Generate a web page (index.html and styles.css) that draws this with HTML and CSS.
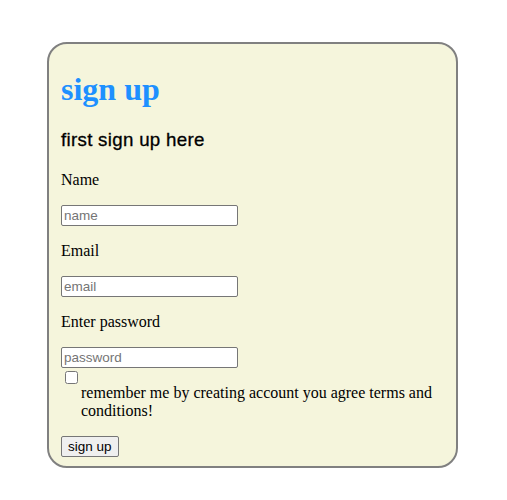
FILE: index.html
```html
<!DOCTYPE html>
<html>
<head>
<meta charset="utf-8">
<link rel="stylesheet" href="styles.css">
</head>
<body>
<form class="card">
  <h1 class="title">sign up</h1>
  <h3 class="subtitle">first sign up here</h3>
  <p class="label">Name</p>
  <input class="field" type="text" placeholder="name">
  <p class="label">Email</p>
  <input class="field" type="email" placeholder="email">
  <p class="label">Enter password</p>
  <input class="field" type="password" placeholder="password">
  <input class="check" type="checkbox">
  <p class="terms">remember me by creating account you agree terms and conditions!</p>
  <button class="btn" type="button">sign up</button>
</form>
</body>
</html>
```
FILE: styles.css
```css
body {
  margin: 8px;
  font-family: "Liberation Serif", "Times New Roman", serif;
  font-size: 16px;
  background: #ffffff;
}
.card {
  box-sizing: border-box;
  width: 411px;
  margin: 34px 0 0 39px;
  padding: 6px 12px 9px 12px;
  background: #f5f5dc;
  border: 2px solid #808080;
  border-radius: 20px;
}
.title {
  margin: 21px 0;
  font-size: 32px;
  font-weight: bold;
  color: #1e90ff;
}
.subtitle {
  margin: 18px 0 20px 0;
  font-family: "Liberation Sans", Arial, sans-serif;
  font-size: 18.72px;
  font-weight: normal;
  letter-spacing: 0.3px;
  -webkit-text-stroke: 0.3px #000;
}
.label {
  margin: 16px 0;
}
.field {
  box-sizing: border-box;
  display: block;
  width: 177px;
  height: 21px;
  margin: 0;
  padding: 1px 2px;
  border: 1px solid #767676;
  border-radius: 2px;
  font-family: "Liberation Sans", Arial, sans-serif;
  font-size: 13.5px;
  background: #fff;
}
.field::placeholder {
  color: #757575;
}
.check {
  display: block;
  width: 13px;
  height: 13px;
  margin: 3px 3px 0 4px;
}
.terms {
  margin: 0 0 16px 20px;
}
.btn {
  box-sizing: border-box;
  height: 21px;
  font-family: "Liberation Sans", Arial, sans-serif;
  font-size: 13.5px;
  padding: 1px 6px;
  border: 1px solid #767676;
  border-radius: 2px;
  background: #efefef;
  color: #000;
}
```
